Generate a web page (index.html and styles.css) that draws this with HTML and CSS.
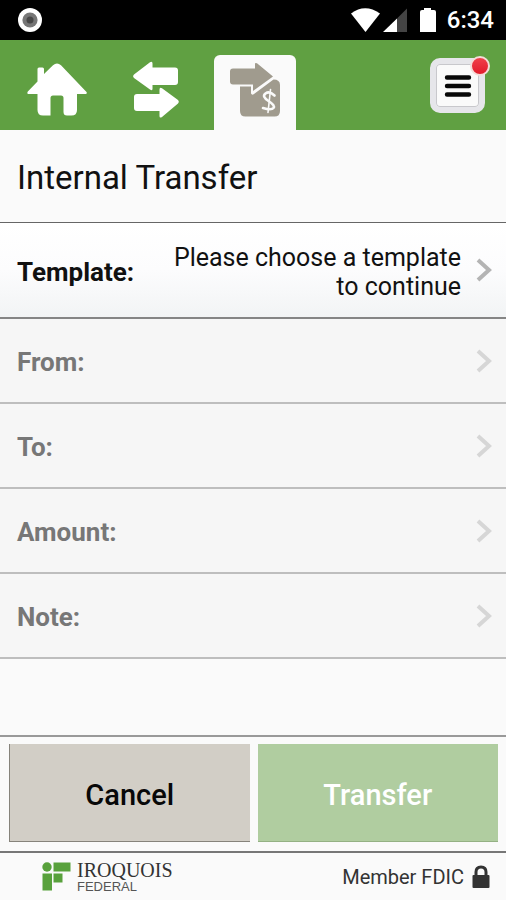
FILE: index.html
```html
<!DOCTYPE html>
<html lang="en">
<head>
<meta charset="utf-8">
<meta name="viewport" content="width=device-width, initial-scale=1">
<title>Internal Transfer</title>
<link rel="stylesheet" href="styles.css">
</head>
<body>
<div class="app">
  <div class="status">
    <svg class="status-dot" width="26" height="26" viewBox="0 0 26 26" aria-hidden="true">
      <circle cx="13" cy="13" r="12" fill="#fff"/><circle cx="13" cy="13" r="7.6" fill="#777"/><circle cx="13" cy="13" r="3.5" fill="#484848"/>
    </svg>
    <svg width="86" height="26" viewBox="0 0 86 26" aria-hidden="true">
      <path d="M0 6.500Q14 -4 29 6.500L14.500 25Z" fill="#fff"/>
      <path d="M56 1.500V25H46V11.500Z" fill="#444"/>
      <path d="M46 11.500V25H32Z" fill="#fff"/>
      <path d="M73 1H80V3H83Q85 3 85 5V25H69V5Q69 3 71 3H73Z" fill="#fff"/>
    </svg>
    <span class="clock">6:34</span>
  </div>

  <nav class="nav" aria-label="Main">
    <a class="nav-link" href="#home" aria-label="Home">
      <svg width="60" height="54" viewBox="0 0 60 54" aria-hidden="true">
        <path d="M10.500 16.500V6Q10.500 4.500 12 4.500H15.500Q17 4.500 17 6V11L26 2.200Q30 -1 34 2.200L59.500 29Q60.500 31 58.500 31H50V47Q50 52.500 44.500 52.500H40Q36.500 52.500 36.500 49V35Q36.500 32.500 34 32.500H26Q23.500 32.500 23.500 35V52.500H16Q10.500 52.500 10.500 47V31H1.500Q-.5 31 .8 28.500L10.500 18.500Z" fill="#fff"/>
      </svg>
    </a>
    <a class="nav-link" href="#transfers" aria-label="Transfers">
      <svg width="46" height="58" viewBox="0 0 46 58" aria-hidden="true">
        <path d="M1 13.500L17 1.300Q19.500 0 19.500 2.500V6.500H42Q45 6.500 45 9.500V21Q45 24 42 24H19.500V28Q19.500 30 17 28.500L1 17Q-.8 15.300 1 13.500Z" fill="#fff"/>
        <path d="M45 39L29 27.300Q26.500 26 26.500 28.500V33H4Q1 33 1 36V47Q1 50 4 50H26.500V55Q26.500 57.500 29 56L45 42.500Q46.600 40.800 45 39Z" fill="#fff"/>
      </svg>
    </a>
    <a class="nav-link active" href="#pay" aria-label="Internal transfer" aria-current="page">
      <svg width="50" height="56" viewBox="0 0 50 56" aria-hidden="true">
        <path d="M3 6.500H25V2Q25 .2 27 1.300L43 14.500L23 29V22.500H3Q0 22.500 0 19.500V9.500Q0 6.500 3 6.500Z" fill="#a09b8e"/>
        <path d="M10 24.500H21V31.500Q22 33.500 24 32L43.500 17.500Q50 17.500 50 23V49Q50 54.500 44.500 54.500H15.500Q10 54.500 10 49Z" fill="#a09b8e"/>
        <g fill="none" stroke="#fafafa" stroke-linecap="round"><path d="M44.500 33.500Q39.500 28.500 35.500 31.500T38.500 39T43.500 46T33 46" stroke-width="2.600"/><path d="M40.500 27.500L38 50.500" stroke-width="1.600"/></g>
      </svg>
    </a>
    <button class="menu" type="button" aria-label="Menu, new items">
      <svg width="28" height="24" viewBox="0 0 28 24" aria-hidden="true"><path d="M3 3.500H25M3 12H25M3 20.500H25" stroke="#080808" stroke-width="4.400" stroke-linecap="round"/></svg>
      <span class="badge"></span>
    </button>
  </nav>

  <main class="content">
    <h1 class="title">Internal Transfer</h1>
    <button class="row template" type="button">
      <span class="label">Template:</span>
      <span class="value">Please choose a template to continue</span>
      <svg class="chevron" width="16" height="24" viewBox="0 0 16 24" aria-hidden="true"><path d="M2 2L13 12L2 22"/></svg>
    </button>
    <button class="row" type="button" disabled>
      <span class="label">From:</span>
      <svg class="chevron" width="16" height="24" viewBox="0 0 16 24" aria-hidden="true"><path d="M2 2L13 12L2 22"/></svg>
    </button>
    <button class="row" type="button" disabled>
      <span class="label">To:</span>
      <svg class="chevron" width="16" height="24" viewBox="0 0 16 24" aria-hidden="true"><path d="M2 2L13 12L2 22"/></svg>
    </button>
    <button class="row" type="button" disabled>
      <span class="label">Amount:</span>
      <svg class="chevron" width="16" height="24" viewBox="0 0 16 24" aria-hidden="true"><path d="M2 2L13 12L2 22"/></svg>
    </button>
    <button class="row" type="button" disabled>
      <span class="label">Note:</span>
      <svg class="chevron" width="16" height="24" viewBox="0 0 16 24" aria-hidden="true"><path d="M2 2L13 12L2 22"/></svg>
    </button>
  </main>

  <div class="actions">
    <button class="btn cancel" type="button">Cancel</button>
    <button class="btn transfer" type="button" disabled>Transfer</button>
  </div>

  <footer class="footer">
    <div class="brand">
      <svg width="29" height="29" viewBox="0 0 29 29" fill="#58a13c" aria-hidden="true">
        <circle cx="5" cy="5" r="4.700"/><path d="M11.500 .5H28.500V9.500H11.500ZM11.500 11.500H20.500V20.500H11.500ZM.5 11.500H10V28.500H.5Z"/>
      </svg>
      <div class="brand-text"><span class="brand-name">IROQUOIS</span><span class="brand-sub">FEDERAL</span></div>
    </div>
    <div class="fdic">
      <span>Member FDIC</span>
      <svg width="18" height="24" viewBox="0 0 18 24" aria-hidden="true"><path d="M4 11V7Q4 2 9 2T14 7V11" fill="none" stroke="#333" stroke-width="3"/><rect x=".5" y="10" width="17" height="13" rx="1" fill="#333"/></svg>
    </div>
  </footer>
</div>
</body>
</html>
```
FILE: styles.css
```css
* { box-sizing: border-box; }

body {
  margin: 0;
  background: #fafafa;
  color: #111;
  font-family: Roboto, "Liberation Sans", sans-serif;
}

button { font: inherit; color: inherit; border: 0; margin: 0; }
svg { display: block; flex: none; }

.app { display: flex; flex-direction: column; min-height: 100vh; }

.status {
  display: flex;
  align-items: center;
  height: 40px;
  padding: 0 12px 0 17px;
  background: #000;
  color: #fff;
}
.status-dot { margin-right: auto; }
.clock { margin-left: 10px; font-size: 24px; font-weight: 500; line-height: 24px; }

.nav {
  display: flex;
  align-items: flex-end;
  height: 90px;
  padding: 0 21px 0 16px;
  background: #60a042;
}
.nav-link {
  display: flex;
  align-items: center;
  justify-content: center;
  width: 82px;
  height: 75px;
  margin-right: 17px;
  padding-bottom: 6px;
}
.nav-link.active {
  border-radius: 6px 6px 0 0;
  background: #fafafa;
}

.menu {
  position: relative;
  display: flex;
  align-items: center;
  justify-content: center;
  width: 55px;
  height: 55px;
  margin: 0 0 17px auto;
  padding: 0;
  border: 6px solid #e6e6ea;
  border-radius: 10px;
  background: #fafafa;
  box-shadow: inset 0 0 0 1px #c8c8cc;
}
.badge {
  position: absolute;
  top: -8px;
  right: -11px;
  width: 20px;
  height: 20px;
  border: 2px solid #f4dcd8;
  border-radius: 50%;
  background: linear-gradient(#f0404a, #e21b2b);
}

.content { flex: 1; }

.title {
  margin: 0;
  padding: 32px 17px 28px;
  border-bottom: 1px solid #666;
  font-size: 33px;
  font-weight: 400;
  line-height: 32px;
}

.row {
  display: flex;
  align-items: center;
  width: 100%;
  min-height: 85px;
  padding: 0 14px 0 17px;
  border-bottom: 2px solid #bebebe;
  background: #f6f6f6;
  color: #777;
  font-size: 25px;
  line-height: 29px;
  text-align: left;
}
.row.template {
  min-height: 96px;
  border-bottom-color: #858585;
  background: linear-gradient(#fff, #fcfcfd 50%, #f2f4f5);
  color: #111;
}
.label, .value { padding-top: 4px; }
.label { font-size: 26px; font-weight: 700; }
.value { flex: 1; margin-left: 32px; text-align: right; }
.chevron {
  margin-left: auto;
  fill: none;
  stroke: #d6d6d6;
  stroke-width: 4px;
}
.template .chevron { margin-left: 15px; stroke: #b4b4b4; }

.actions {
  display: grid;
  grid-template-columns: 1fr 1fr;
  gap: 8px;
  padding: 7px 8px 9px 9px;
  border-top: 2px solid #999;
}
.btn {
  height: 98px;
  padding-top: 6px;
  font-size: 29px;
  font-weight: 500;
}
.cancel {
  border-bottom: 1px solid #86837b;
  border-left: 1px solid #86837b;
  background: #d2cec6;
  color: #080808;
}
.transfer { border-bottom: 1px solid #94b184; background: #b0cda0; color: #fff; }

.footer {
  display: flex;
  align-items: center;
  justify-content: space-between;
  height: 49px;
  padding: 0 16px 0 42px;
  border-top: 2px solid #777;
}
.brand { display: flex; align-items: center; gap: 6px; }
.brand-text { display: flex; flex-direction: column; }
.brand-name { color: #333; font-family: "Liberation Serif", serif; font-size: 20px; line-height: 20px; }
.brand-sub { color: #555; font-family: "Liberation Sans", sans-serif; font-size: 13px; line-height: 14px; }
.fdic { display: flex; align-items: center; gap: 8px; color: #333; font-size: 20px; }
```
